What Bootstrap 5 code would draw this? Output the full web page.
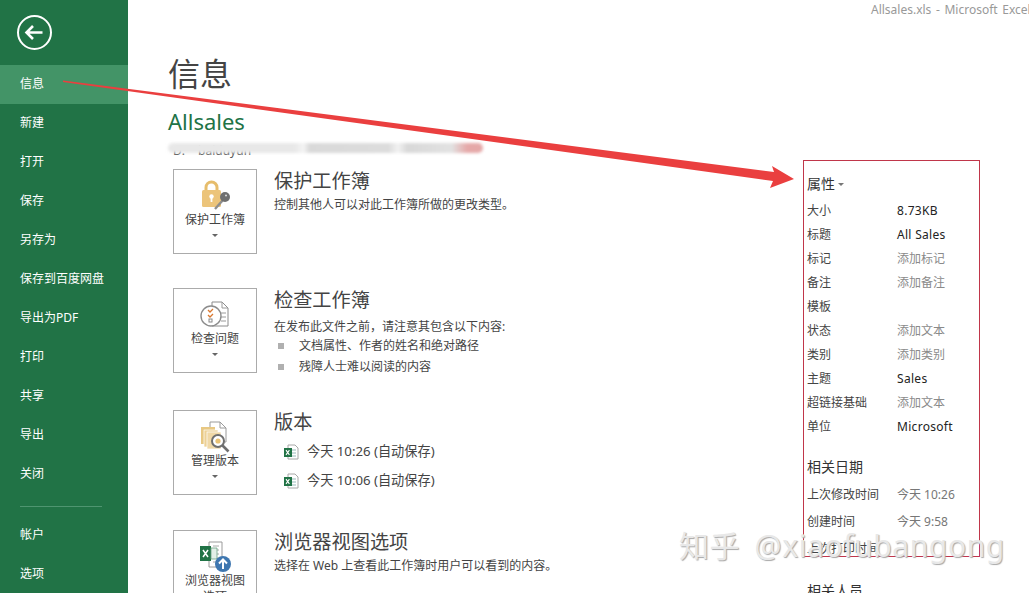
<!DOCTYPE html>
<html lang="zh-CN">
  <head>
    <meta charset="UTF-8" />
    <meta name="viewport" content="width=device-width, initial-scale=1.0" />
    <title>信息 - Allsales.xls</title>
    <link href="https://cdn.jsdelivr.net/npm/bootstrap@5.3.0/dist/css/bootstrap.min.css" rel="stylesheet" />
    <style>
      html, body { height: 593px; overflow: hidden; }
      body { font-family: "Noto Sans", "Noto Sans CJK SC", sans-serif; font-size: 12px; color: #444; background: #fff; position: relative; }
      .side { width: 128px; height: 593px; background: #217346; color: #fff; }
      .back-wrap { height: 65px; padding: 15px 0 0 17px; }
      .side-item { height: 39px; line-height: 38px; padding-left: 20px; color: #fff; text-decoration: none; display: block; }
      .side-item.on { background: #439467; }
      .side-sep { border-top: 1px solid #4f9570; margin: 12px 26px 9px 20px; }
      .main-area { min-width: 0; overflow: hidden; }
      .title-bar { height: 18px; padding-left: 743px; color: #999; line-height: 20px; white-space: nowrap; word-spacing: 1.5px; }
      .left-col { width: 675px; padding-left: 40px; flex: none; }
      .page-title { font-size: 32px; font-weight: 400; color: #444; line-height: 44px; margin: 34px 0 0; }
      .file-name { font-size: 22px; font-weight: 400; color: #217346; line-height: 30px; margin: 10px 0 0; }
      .path-line { position: relative; height: 16px; margin: 7px 0 10px; }
      .path-text { padding-left: 5px; line-height: 16px; font-size: 12px; color: #555; white-space: nowrap; word-spacing: 10px; }
      .path-blur { position: absolute; left: 0; top: 0; height: 10px; width: 315px; filter: blur(1.5px); background: linear-gradient(90deg, #e8e8e8 0, #e8e8e8 40%, #f4f4f4 43%, #d9d9d9 45%, #dcdcdc 70%, #f2f2f2 73%, #d8d8d8 76%, #e2e2e2 90%, #e5a8a8 95%, #e5a8a8 100%); border-radius: 5px; }
      .info-block { margin-left: 5px; gap: 17px; height: 85px; }
      .info-block.gap-a { margin-bottom: 34px; }
      .info-block.gap-b { margin-bottom: 37px; }
      .info-block.gap-c { margin-bottom: 35px; }
      .tile { width: 84px; height: 85px; flex: none; border: 1px solid #ababab; background: #fff; padding: 10px 8px 0; text-align: center; line-height: 16px; color: #444; overflow: hidden; }
      .tile svg { flex: none; }
      .tile-caret { width: 0; height: 0; flex: none; margin-top: 6px; border-left: 3px solid transparent; border-right: 3px solid transparent; border-top: 3px solid #666; }
      .block-title { font-size: 19.2px; font-weight: 400; line-height: 24px; color: #444; margin: 0 0 3px; }
      .block-text { line-height: 18px; margin: 0; color: #444; }
      .block-text.spaced { margin-top: 6px; }
      .doc-list { list-style: none; padding: 0; margin: -1px 0 0; }
      .doc-list li { display: flex; align-items: center; height: 21px; color: #444; }
      .doc-list li::before { content: ""; width: 6px; height: 6px; background: #b0b0b0; margin: 0 15px 0 4px; }
      .ver-row { display: flex; align-items: center; height: 29px; padding-left: 9px; font-size: 13.2px; color: #444; gap: 8px; }
      .prop-col { width: 200px; padding: 0 0 0 4px; flex: none; }
      .prop-head { font-size: 14px; line-height: 20px; color: #333; margin: 156px 0 5px; font-weight: 400; display: flex; align-items: center; gap: 3px; }
      .prop-caret { width: 0; height: 0; border-left: 3px solid transparent; border-right: 3px solid transparent; border-top: 3px solid #777; }
      .prop-row { display: flex; height: 24px; line-height: 24px; white-space: nowrap; }
      .prop-row .lbl { width: 90px; flex: none; }
      .val { color: #222; letter-spacing: .3px; }
      .val-add { color: #8a8a8a; }
      .date-row { height: 27px; line-height: 27px; }
      .date-row .val-add { color: #777; }
      .date-head { font-size: 14px; font-weight: 400; color: #333; line-height: 20px; margin: 18px 0 4px; }
      .people-head { margin: 19px 0 0; }
      .marks { position: absolute; left: 0; top: 0; pointer-events: none; }
      .watermark { position: absolute; left: 679px; top: 527px; font-size: 30px; line-height: 38px; color: #e8e8e8; text-shadow: 1px 1px 1px #a8a8a8; white-space: nowrap; letter-spacing: .6px; word-spacing: 6px; }
    </style>
  </head>
  <body>
    <div class="d-flex">
      <nav class="side flex-shrink-0">
        <div class="back-wrap">
          <svg width="35" height="35" viewBox="0 0 35 35" fill="none" stroke="#fff" stroke-width="2">
            <circle cx="17.5" cy="17.5" r="16.5" />
            <path d="M9.5 17.5h16M16 11l-6.5 6.5 6.5 6.5" stroke-width="2.6" />
          </svg>
        </div>
        <a class="side-item on" href="#">信息</a>
        <a class="side-item" href="#">新建</a>
        <a class="side-item" href="#">打开</a>
        <a class="side-item" href="#">保存</a>
        <a class="side-item" href="#">另存为</a>
        <a class="side-item" href="#">保存到百度网盘</a>
        <a class="side-item" href="#">导出为PDF</a>
        <a class="side-item" href="#">打印</a>
        <a class="side-item" href="#">共享</a>
        <a class="side-item" href="#">导出</a>
        <a class="side-item" href="#">关闭</a>
        <div class="side-sep"></div>
        <a class="side-item" href="#">帐户</a>
        <a class="side-item" href="#">选项</a>
      </nav>

      <main class="main-area flex-grow-1">
        <div class="title-bar">Allsales.xls - Microsoft Excel</div>
        <div class="d-flex">
          <div class="left-col">
            <h1 class="page-title">信息</h1>
            <h2 class="file-name">Allsales</h2>
            <div class="path-line">
              <div class="path-text">D: baiduyun</div>
              <div class="path-blur"></div>
            </div>

            <section class="info-block gap-a d-flex">
              <button type="button" class="tile d-flex flex-column align-items-center">
                <svg width="32" height="32" viewBox="0 0 32 32">
                  <path d="M7 10V7.5a5.5 5.5 0 0 1 11 0V10" fill="none" stroke="#e6bd6c" stroke-width="3" />
                  <rect x="3" y="10" width="19" height="17" rx="1.5" fill="#ecc47a" />
                  <circle cx="12.5" cy="16.5" r="2.2" fill="#fff" />
                  <path d="M11.6 17h1.8v5h-1.8z" fill="#fff" />
                  <path d="M16 29l8-9" stroke="#8d8d8d" stroke-width="2.4" />
                  <circle cx="26" cy="17" r="5" fill="#6f6f6f" />
                  <circle cx="27" cy="15.5" r="1" fill="#ddd" />
                </svg>
                保护工作簿
                <div class="tile-caret"></div>
              </button>
              <div>
                <h3 class="block-title">保护工作簿</h3>
                <p class="block-text">控制其他人可以对此工作簿所做的更改类型。</p>
              </div>
            </section>

            <section class="info-block gap-b d-flex">
              <button type="button" class="tile d-flex flex-column align-items-center">
                <svg width="32" height="32" viewBox="0 0 32 32" fill="none">
                  <path d="M13 3h10l6 6v18H13z" fill="#fff" stroke="#8c8c8c" />
                  <path d="M23 3v6h6M22 14h5M22 18h5M22 22h5" stroke="#9a9a9a" />
                  <circle cx="12" cy="17" r="10" fill="#fff" stroke="#8c8c8c" stroke-width="1.4" />
                  <path d="M9 11l2 2 3-3M9 16l2 2 3-3" stroke="#d9772e" stroke-width="1.3" />
                  <rect x="10" y="20" width="3" height="3" stroke="#888" />
                </svg>
                检查问题
                <div class="tile-caret"></div>
              </button>
              <div>
                <h3 class="block-title">检查工作簿</h3>
                <p class="block-text spaced">在发布此文件之前，请注意其包含以下内容:</p>
                <ul class="doc-list">
                  <li>文档属性、作者的姓名和绝对路径</li>
                  <li>残障人士难以阅读的内容</li>
                </ul>
              </div>
            </section>

            <section class="info-block gap-c d-flex">
              <button type="button" class="tile d-flex flex-column align-items-center">
                <svg width="32" height="32" viewBox="0 0 32 32" fill="none">
                  <path d="M11 1h10l6 6v14H11z" fill="#fff" stroke="#9a9a9a" />
                  <path d="M21 1v6h6" stroke="#9a9a9a" />
                  <rect x="2" y="6" width="14" height="17" fill="#e8c883" />
                  <rect x="5" y="9" width="14" height="17" fill="#edd196" stroke="#fff" stroke-width=".7" />
                  <rect x="8" y="11" width="14" height="17" fill="#f0d8a6" stroke="#fff" stroke-width=".7" />
                  <circle cx="19" cy="20" r="6" fill="#fff" stroke="#6f6f6f" stroke-width="2" />
                  <circle cx="19" cy="20" r="2.6" fill="#e9c274" />
                  <path d="M23.5 24.5l6 6" stroke="#6f6f6f" stroke-width="2.6" />
                </svg>
                管理版本
                <div class="tile-caret"></div>
              </button>
              <div>
                <h3 class="block-title">版本</h3>
                <div class="ver-row">
                  <svg width="16" height="16" viewBox="0 0 16 16"><path d="M5 1h7l3 3v11H5z" fill="#fff" stroke="#a8a8a8" /><path d="M9 6h4M9 9h4M9 12h4" stroke="#9bb" /><rect x="1" y="4" width="8" height="9" fill="#217346" /><path d="M3 6.2l3.4 4.6M6.4 6.2L3 10.8" stroke="#fff" stroke-width="1.1" /></svg>
                  今天 10:26 (自动保存)
                </div>
                <div class="ver-row">
                  <svg width="16" height="16" viewBox="0 0 16 16"><path d="M5 1h7l3 3v11H5z" fill="#fff" stroke="#a8a8a8" /><path d="M9 6h4M9 9h4M9 12h4" stroke="#9bb" /><rect x="1" y="4" width="8" height="9" fill="#217346" /><path d="M3 6.2l3.4 4.6M6.4 6.2L3 10.8" stroke="#fff" stroke-width="1.1" /></svg>
                  今天 10:06 (自动保存)
                </div>
              </div>
            </section>

            <section class="info-block d-flex">
              <button type="button" class="tile d-flex flex-column align-items-center">
                <svg width="32" height="32" viewBox="0 0 32 32" fill="none">
                  <path d="M10 1h13v25H10z" fill="#fff" stroke="#9a9a9a" />
                  <path d="M14 5h6M14 9h6M14 13h6M14 17h6M14 21h3" stroke="#a8a8a8" />
                  <rect x="1" y="5" width="11" height="15" fill="#217346" />
                  <path d="M4 9l5 7M9 9l-5 7" stroke="#fff" stroke-width="1.5" />
                  <path d="M12 7h6v11h-6z" fill="#e3efe8" stroke="#6aa283" stroke-width=".8" />
                  <circle cx="24" cy="23" r="8" fill="#3f77b0" />
                  <path d="M24 28v-9M20 22.5l4-4 4 4" stroke="#fff" stroke-width="2" />
                </svg>
                <span>浏览器视图选项</span>
              </button>
              <div>
                <h3 class="block-title">浏览器视图选项</h3>
                <p class="block-text">选择在 Web 上查看此工作簿时用户可以看到的内容。</p>
              </div>
            </section>
          </div>

          <aside class="prop-col">
            <h3 class="prop-head">属性 <span class="prop-caret"></span></h3>
            <div class="prop-row"><span class="lbl">大小</span><span class="val">8.73KB</span></div>
            <div class="prop-row"><span class="lbl">标题</span><span class="val">All Sales</span></div>
            <div class="prop-row"><span class="lbl">标记</span><span class="val-add">添加标记</span></div>
            <div class="prop-row"><span class="lbl">备注</span><span class="val-add">添加备注</span></div>
            <div class="prop-row"><span class="lbl">模板</span></div>
            <div class="prop-row"><span class="lbl">状态</span><span class="val-add">添加文本</span></div>
            <div class="prop-row"><span class="lbl">类别</span><span class="val-add">添加类别</span></div>
            <div class="prop-row"><span class="lbl">主题</span><span class="val">Sales</span></div>
            <div class="prop-row"><span class="lbl">超链接基础</span><span class="val-add">添加文本</span></div>
            <div class="prop-row"><span class="lbl">单位</span><span class="val">Microsoft</span></div>
            <h3 class="date-head">相关日期</h3>
            <div class="prop-row date-row"><span class="lbl">上次修改时间</span><span class="val-add">今天 10:26</span></div>
            <div class="prop-row date-row"><span class="lbl">创建时间</span><span class="val-add">今天 9:58</span></div>
            <div class="prop-row date-row"><span class="lbl">上次打印时间</span></div>
            <h3 class="date-head people-head">相关人员</h3>
          </aside>
        </div>
      </main>
    </div>

    <svg class="marks" width="1029" height="593" viewBox="0 0 1029 593" fill="none">
      <rect x="803.5" y="160.5" width="176" height="396" stroke="#c0364a" />
      <path d="M63 80.5L774 172 772 166 794 179 770 188 773 181 63 82Z" fill="#ea3f3f" />
    </svg>
    <div class="watermark">知乎 @xiaofubangong</div>
  </body>
</html>
